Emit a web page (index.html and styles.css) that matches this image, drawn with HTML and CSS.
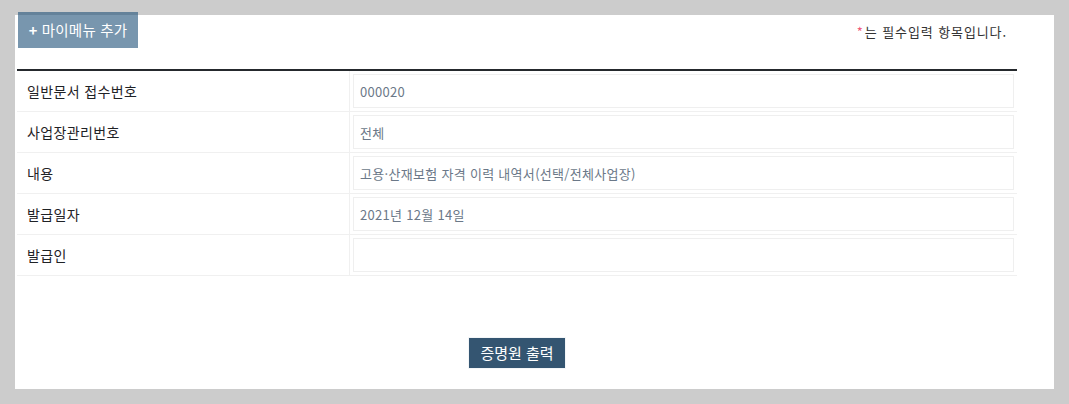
FILE: index.html
```html
<!DOCTYPE html>
<html lang="ko">
<head>
<meta charset="utf-8">
<link rel="stylesheet" href="styles.css">
</head>
<body>
<div class="panel">
  <div class="topbar">
    <button class="mymenu"><span class="plus">+</span> 마이메뉴 추가</button>
    <p class="notice"><span class="star">*</span>는 필수입력 항목입니다.</p>
  </div>
  <div class="form">
    <div class="row">
      <div class="label">일반문서 접수번호</div>
      <div class="value"><div class="box">000020</div></div>
    </div>
    <div class="row">
      <div class="label">사업장관리번호</div>
      <div class="value"><div class="box">전체</div></div>
    </div>
    <div class="row">
      <div class="label">내용</div>
      <div class="value"><div class="box">고용·산재보험 자격 이력 내역서(선택/전체사업장)</div></div>
    </div>
    <div class="row">
      <div class="label">발급일자</div>
      <div class="value"><div class="box">2021년 12월 14일</div></div>
    </div>
    <div class="row">
      <div class="label">발급인</div>
      <div class="value"><div class="box"></div></div>
    </div>
  </div>
  <div class="actions">
    <button class="print">증명원 출력</button>
  </div>
</div>
</body>
</html>
```
FILE: styles.css
```css
* { box-sizing: border-box; }
html, body { margin: 0; }
body {
  background: #cccccc;
  padding: 15px;
  font-family: "Noto Sans CJK KR", "Noto Sans", sans-serif;
}
.panel {
  width: 1039px;
  height: 374px;
  background: #ffffff;
}
.topbar {
  display: flex;
  justify-content: space-between;
  align-items: center;
  width: 989px;
  margin-left: 3px;
}
.mymenu {
  margin-top: -3px;
  width: 120px;
  height: 36px;
  border: 0;
  padding: 0 0 1px 0;
  background: rgba(30, 80, 120, 0.6);
  color: #ffffff;
  font-family: inherit;
  font-size: 14.5px;
  letter-spacing: 0.2px;
  line-height: 20px;
  text-align: center;
}
.plus { font-weight: bold; }
.notice {
  margin: 0;
  padding-top: 1px;
  font-size: 13px;
  letter-spacing: 0.9px;
  line-height: 20px;
  color: #333333;
}
.star { color: #ef5b7b; margin-right: 1px; }
.form {
  margin-top: 21px;
  margin-left: 2px;
  width: 1000px;
  border-top: 2px solid #25292d;
}
.row {
  display: flex;
  height: 41px;
  border-bottom: 1px solid #f0f0f0;
}
.label {
  width: 333px;
  border-right: 1px solid #f0f0f0;
  padding-left: 10px;
  display: flex;
  align-items: center;
  font-size: 14px;
  letter-spacing: 0.35px;
  color: #1f2226;
}
.value {
  flex: 1;
  padding: 3px;
}
.box {
  height: 34px;
  border: 1px solid #efefef;
  padding-left: 6px;
  display: flex;
  align-items: center;
  font-size: 13px;
  letter-spacing: 0.3px;
  color: #6b7888;
}
.actions {
  width: 1000px;
  margin-left: 2px;
  margin-top: 61px;
  display: flex;
  justify-content: center;
}
.print {
  width: 98px;
  height: 32px;
  border: 1px solid #f3f6f8;
  background: #345571;
  color: #ffffff;
  font-family: inherit;
  font-size: 15px;
  padding: 0 0 1px 0;
}
```
